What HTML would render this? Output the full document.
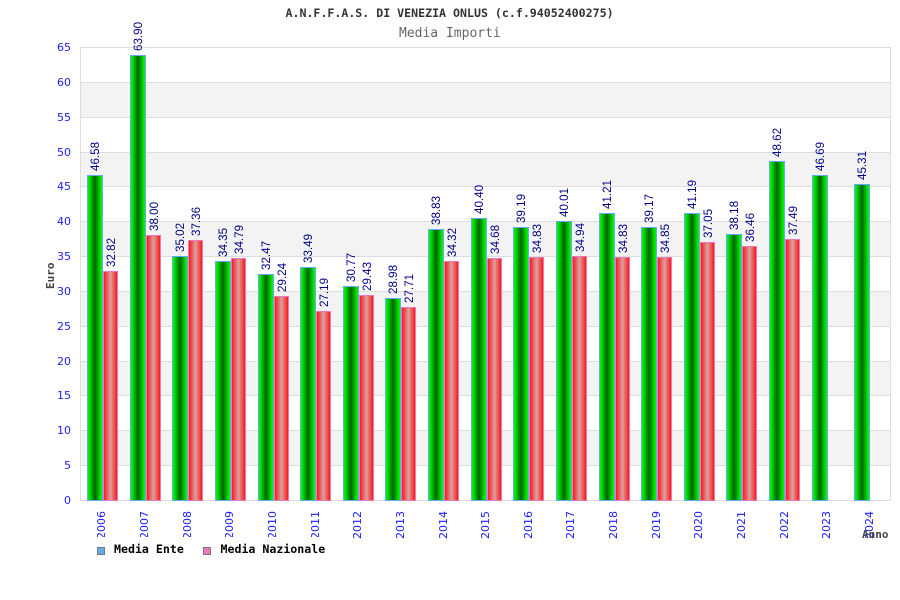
<!DOCTYPE html>
<html>
<head>
<meta charset="utf-8">
<title>Media Importi</title>
<style>
html,body{margin:0;padding:0;background:#fff;}
svg{display:block;}
.t{font:bold 11.6px "DejaVu Sans Mono",monospace;fill:#333;}
.s{font:13px "DejaVu Sans Mono",monospace;fill:#666;}
.y{font:11px "DejaVu Sans",sans-serif;fill:#1c1cff;text-anchor:end;}
.x{font:11px "DejaVu Sans",sans-serif;fill:#1c1cff;}
.v{font:11.6px "Liberation Sans",sans-serif;fill:#000088;}
.a{font:bold 11px "DejaVu Sans Mono",monospace;fill:#444;}
.l{font:bold 11.6px "DejaVu Sans Mono",monospace;fill:#000;}
.g{fill:url(#gg);stroke:#66aaff;stroke-width:1;}
.r{fill:url(#rr);stroke:#ee77bb;stroke-width:1;}
</style>
</head>
<body>
<svg width="900" height="600" viewBox="0 0 900 600" xmlns="http://www.w3.org/2000/svg">
<defs>
<linearGradient id="gg" x1="0" x2="1" y1="0" y2="0"><stop offset="0" stop-color="#00ff00"/><stop offset=".12" stop-color="#00e800"/><stop offset=".5" stop-color="#006400"/><stop offset=".88" stop-color="#00e800"/><stop offset="1" stop-color="#00ff00"/></linearGradient>
<linearGradient id="rr" x1="0" x2="1" y1="0" y2="0"><stop offset="0" stop-color="#ff1010"/><stop offset=".5" stop-color="#d8a0a0"/><stop offset="1" stop-color="#ff1010"/></linearGradient>
</defs>
<rect width="900" height="600" fill="#fff"/>
<g fill="#f3f3f3">
<rect x="81" y="82" width="809" height="35"/><rect x="81" y="152" width="809" height="34"/><rect x="81" y="221" width="809" height="35"/><rect x="81" y="291" width="809" height="35"/><rect x="81" y="361" width="809" height="34"/><rect x="81" y="430" width="809" height="35"/>
</g>
<g fill="#dddddd">
<rect x="80" y="47" width="810" height="1"/><rect x="80" y="82" width="810" height="1"/><rect x="80" y="117" width="810" height="1"/><rect x="80" y="152" width="810" height="1"/><rect x="80" y="186" width="810" height="1"/><rect x="80" y="221" width="810" height="1"/><rect x="80" y="256" width="810" height="1"/><rect x="80" y="291" width="810" height="1"/><rect x="80" y="326" width="810" height="1"/><rect x="80" y="361" width="810" height="1"/><rect x="80" y="395" width="810" height="1"/><rect x="80" y="430" width="810" height="1"/><rect x="80" y="465" width="810" height="1"/><rect x="80" y="500" width="811" height="1"/>
<rect x="80" y="47" width="1" height="454"/><rect x="890" y="47" width="1" height="454"/>
</g>
<text class="t" x="285.5" y="17">A.N.F.F.A.S. DI VENEZIA ONLUS (c.f.94052400275)</text>
<text class="s" x="399" y="37">Media Importi</text>
<g>
<text class="y" x="71" y="51">65</text><text class="y" x="71" y="86">60</text><text class="y" x="71" y="121">55</text><text class="y" x="71" y="156">50</text><text class="y" x="71" y="190">45</text><text class="y" x="71" y="225">40</text><text class="y" x="71" y="260">35</text><text class="y" x="71" y="295">30</text><text class="y" x="71" y="330">25</text><text class="y" x="71" y="365">20</text><text class="y" x="71" y="399">15</text><text class="y" x="71" y="434">10</text><text class="y" x="71" y="469">5</text><text class="y" x="71" y="504">0</text>
</g>
<rect class="g" x="87.5" y="175.5" width="15" height="325"/><rect class="r" x="103.5" y="271.5" width="14" height="229"/>
<rect class="g" x="130.5" y="55.5" width="15" height="445"/><rect class="r" x="146.5" y="235.5" width="14" height="265"/>
<rect class="g" x="172.5" y="256.5" width="15" height="244"/><rect class="r" x="188.5" y="240.5" width="14" height="260"/>
<rect class="g" x="215.5" y="261.5" width="15" height="239"/><rect class="r" x="231.5" y="258.5" width="14" height="242"/>
<rect class="g" x="258.5" y="274.5" width="15" height="226"/><rect class="r" x="274.5" y="296.5" width="14" height="204"/>
<rect class="g" x="300.5" y="267.5" width="15" height="233"/><rect class="r" x="316.5" y="311.5" width="14" height="189"/>
<rect class="g" x="343.5" y="286.5" width="15" height="214"/><rect class="r" x="359.5" y="295.5" width="14" height="205"/>
<rect class="g" x="385.5" y="298.5" width="15" height="202"/><rect class="r" x="401.5" y="307.5" width="14" height="193"/>
<rect class="g" x="428.5" y="229.5" width="15" height="271"/><rect class="r" x="444.5" y="261.5" width="14" height="239"/>
<rect class="g" x="471.5" y="218.5" width="15" height="282"/><rect class="r" x="487.5" y="258.5" width="14" height="242"/>
<rect class="g" x="513.5" y="227.5" width="15" height="273"/><rect class="r" x="529.5" y="257.5" width="14" height="243"/>
<rect class="g" x="556.5" y="221.5" width="15" height="279"/><rect class="r" x="572.5" y="256.5" width="14" height="244"/>
<rect class="g" x="599.5" y="213.5" width="15" height="287"/><rect class="r" x="615.5" y="257.5" width="14" height="243"/>
<rect class="g" x="641.5" y="227.5" width="15" height="273"/><rect class="r" x="657.5" y="257.5" width="14" height="243"/>
<rect class="g" x="684.5" y="213.5" width="15" height="287"/><rect class="r" x="700.5" y="242.5" width="14" height="258"/>
<rect class="g" x="726.5" y="234.5" width="15" height="266"/><rect class="r" x="742.5" y="246.5" width="14" height="254"/>
<rect class="g" x="769.5" y="161.5" width="15" height="339"/><rect class="r" x="785.5" y="239.5" width="14" height="261"/>
<rect class="g" x="812.5" y="175.5" width="15" height="325"/>
<rect class="g" x="854.5" y="184.5" width="15" height="316"/>
<g>
<text class="v" transform="translate(99,171) rotate(-90)">46.58</text><text class="v" transform="translate(115,267) rotate(-90)">32.82</text>
<text class="v" transform="translate(142,51) rotate(-90)">63.90</text><text class="v" transform="translate(158,231) rotate(-90)">38.00</text>
<text class="v" transform="translate(184,252) rotate(-90)">35.02</text><text class="v" transform="translate(200,236) rotate(-90)">37.36</text>
<text class="v" transform="translate(227,257) rotate(-90)">34.35</text><text class="v" transform="translate(243,254) rotate(-90)">34.79</text>
<text class="v" transform="translate(270,270) rotate(-90)">32.47</text><text class="v" transform="translate(286,292) rotate(-90)">29.24</text>
<text class="v" transform="translate(312,263) rotate(-90)">33.49</text><text class="v" transform="translate(328,307) rotate(-90)">27.19</text>
<text class="v" transform="translate(355,282) rotate(-90)">30.77</text><text class="v" transform="translate(371,291) rotate(-90)">29.43</text>
<text class="v" transform="translate(397,294) rotate(-90)">28.98</text><text class="v" transform="translate(413,303) rotate(-90)">27.71</text>
<text class="v" transform="translate(440,225) rotate(-90)">38.83</text><text class="v" transform="translate(456,257) rotate(-90)">34.32</text>
<text class="v" transform="translate(483,214) rotate(-90)">40.40</text><text class="v" transform="translate(499,254) rotate(-90)">34.68</text>
<text class="v" transform="translate(525,223) rotate(-90)">39.19</text><text class="v" transform="translate(541,253) rotate(-90)">34.83</text>
<text class="v" transform="translate(568,217) rotate(-90)">40.01</text><text class="v" transform="translate(584,252) rotate(-90)">34.94</text>
<text class="v" transform="translate(611,209) rotate(-90)">41.21</text><text class="v" transform="translate(627,253) rotate(-90)">34.83</text>
<text class="v" transform="translate(653,223) rotate(-90)">39.17</text><text class="v" transform="translate(669,253) rotate(-90)">34.85</text>
<text class="v" transform="translate(696,209) rotate(-90)">41.19</text><text class="v" transform="translate(712,238) rotate(-90)">37.05</text>
<text class="v" transform="translate(738,230) rotate(-90)">38.18</text><text class="v" transform="translate(754,242) rotate(-90)">36.46</text>
<text class="v" transform="translate(781,157) rotate(-90)">48.62</text><text class="v" transform="translate(797,235) rotate(-90)">37.49</text>
<text class="v" transform="translate(824,171) rotate(-90)">46.69</text>
<text class="v" transform="translate(866,180) rotate(-90)">45.31</text>
</g>
<g>
<text class="x" transform="translate(105,539) rotate(-90)">2006</text><text class="x" transform="translate(148,539) rotate(-90)">2007</text><text class="x" transform="translate(191,539) rotate(-90)">2008</text><text class="x" transform="translate(233,539) rotate(-90)">2009</text><text class="x" transform="translate(276,539) rotate(-90)">2010</text><text class="x" transform="translate(319,539) rotate(-90)">2011</text><text class="x" transform="translate(361,539) rotate(-90)">2012</text><text class="x" transform="translate(404,539) rotate(-90)">2013</text><text class="x" transform="translate(447,539) rotate(-90)">2014</text><text class="x" transform="translate(489,539) rotate(-90)">2015</text><text class="x" transform="translate(532,539) rotate(-90)">2016</text><text class="x" transform="translate(574,539) rotate(-90)">2017</text><text class="x" transform="translate(617,539) rotate(-90)">2018</text><text class="x" transform="translate(660,539) rotate(-90)">2019</text><text class="x" transform="translate(702,539) rotate(-90)">2020</text><text class="x" transform="translate(745,539) rotate(-90)">2021</text><text class="x" transform="translate(788,539) rotate(-90)">2022</text><text class="x" transform="translate(830,539) rotate(-90)">2023</text><text class="x" transform="translate(873,539) rotate(-90)">2024</text>
</g>
<text class="a" transform="translate(54,289) rotate(-90)">Euro</text>
<text class="a" x="862" y="538">Anno</text>
<rect x="90" y="537" width="245" height="24" fill="#fff"/>
<rect x="97.5" y="547.5" width="7" height="7" fill="#66aaee" stroke="#777"/>
<text class="l" x="114" y="553">Media Ente</text>
<rect x="203.5" y="547.5" width="7" height="7" fill="#ee77bb" stroke="#777"/>
<text class="l" x="220.5" y="553">Media Nazionale</text>
</svg>
</body>
</html>
